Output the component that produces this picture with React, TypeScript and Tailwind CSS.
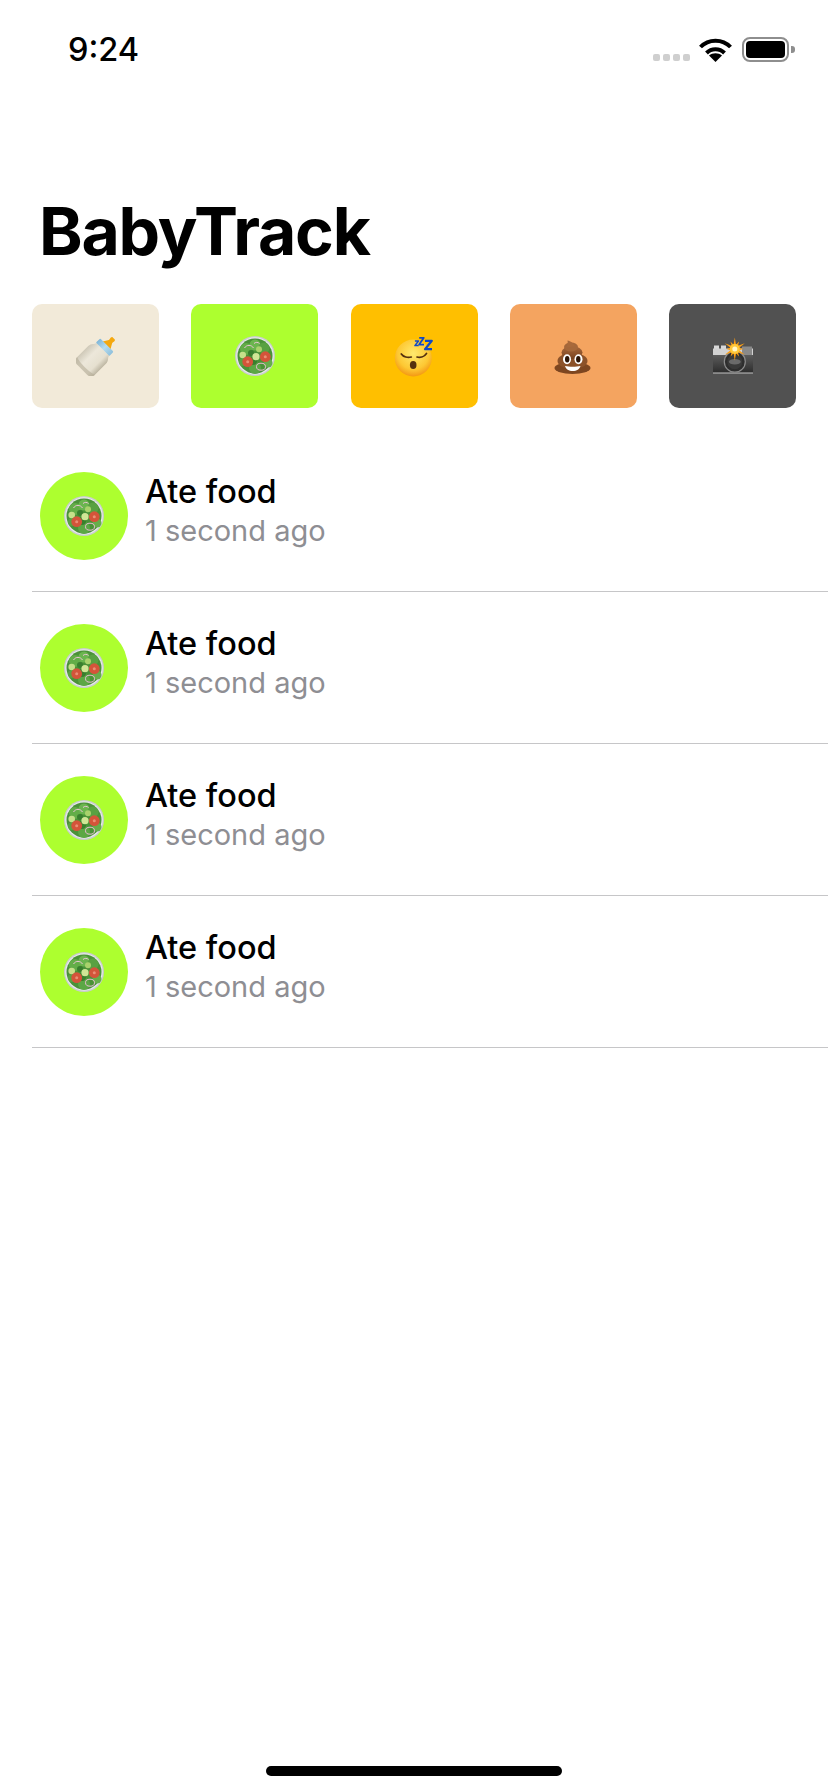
import React from "react";

function Bottle() {
  return (
    <svg viewBox="0 0 40 40" className="h-10 w-10">
      <defs>
        <linearGradient id="milk" x1="0" y1="0" x2="1" y2="0">
          <stop offset="0" stopColor="#cfc9b8" />
          <stop offset="0.35" stopColor="#ece7da" />
          <stop offset="0.75" stopColor="#e6e0d0" />
          <stop offset="1" stopColor="#bdb6a2" />
        </linearGradient>
        <linearGradient id="collar" x1="0" y1="0" x2="1" y2="0">
          <stop offset="0" stopColor="#7fb6d8" />
          <stop offset="0.5" stopColor="#b5dcef" />
          <stop offset="1" stopColor="#8fc0dc" />
        </linearGradient>
      </defs>
      <g transform="translate(20 20) rotate(45)">
        <path d="M-1.300 -25c-.8 0-1.200.7-1.200 1.500 0 1 .5 1.500.2 3L-5.500 -15h11l-3.200-5.500c-.3-1.500.2-2 .2-3 0-.8-.4-1.500-1.200-1.500z" fill="#f4a80f" />
        <rect x="-9.500" y="-15.500" width="19" height="6.500" rx="1.500" fill="url(#collar)" />
        <path d="M-9 -9.500h18c0 2.500 3.500 3.500 3.500 8V14c0 3.500-2.500 5.500-5.500 5.500H-7c-3 0-5.500-2-5.500-5.500V-1.500c0-4.500 3.500-5.500 3.500-8z" fill="url(#milk)" />
        <path d="M-12.500 14c0 3.500 2.500 5.500 5.500 5.500H7c3 0 5.500-2 5.500-5.500-4 2.500-21 2.500-25 0z" fill="#b5ad98" opacity="0.6" />
      </g>
    </svg>
  );
}

function Salad() {
  return (
    <svg viewBox="0 0 40 40" className="h-10 w-10">
      <circle cx="20" cy="20" r="20" fill="#c9cdcd" />
      <circle cx="20" cy="20" r="18.800" fill="#e6e9e8" />
      <circle cx="20" cy="20" r="17.500" fill="#4a9238" />
      <circle cx="11" cy="13" r="6" fill="#63ad48" />
      <circle cx="20" cy="9" r="5.500" fill="#6bb54f" />
      <circle cx="29" cy="12" r="5.500" fill="#58a142" />
      <circle cx="33" cy="27" r="4.500" fill="#66ae4b" />
      <circle cx="20" cy="32" r="6" fill="#5ca745" />
      <circle cx="8" cy="26" r="4" fill="#5aa343" />
      <circle cx="18" cy="25" r="4" fill="#397f2e" />
      <circle cx="16" cy="17" r="3" fill="#397f2e" />
      <circle cx="7.700" cy="19" r="3.300" fill="#c6e08a" />
      <circle cx="21" cy="20.700" r="3.600" fill="#d0e696" />
      <circle cx="24" cy="13.300" r="3" fill="#a9d26c" />
      <circle cx="12.700" cy="25.700" r="5.400" fill="#d4543a" />
      <circle cx="30.300" cy="20.700" r="5.400" fill="#d4543a" />
      <circle cx="12.700" cy="25.700" r="1.500" fill="#ea8f74" />
      <circle cx="30.300" cy="20.700" r="1.500" fill="#ea8f74" />
      <ellipse cx="26" cy="30.700" rx="4.500" ry="3.500" fill="none" stroke="#e8bcd0" strokeWidth="1" />
      <path d="M9.500 12c2-3.500 7-3.500 9 0M19 7.500c1.500-1.500 4-1.500 5.500 0" fill="none" stroke="#ecc4d6" strokeWidth="1" />
    </svg>
  );
}

function Sleeping() {
  return (
    <svg viewBox="0 0 40 42" className="h-[42px] w-10">
      <defs>
        <radialGradient id="face" cx="0.5" cy="0.38" r="0.65">
          <stop offset="0" stopColor="#ffe96e" />
          <stop offset="0.65" stopColor="#fdc833" />
          <stop offset="1" stopColor="#f2900f" />
        </radialGradient>
      </defs>
      <circle cx="19.300" cy="23" r="18.500" fill="url(#face)" />
      <path d="M7.300 19c2 3 6.500 4 10 3M23 22c3.500 1 7.500-.5 9.500-3.500" fill="none" stroke="#54300f" strokeWidth="1.700" strokeLinecap="round" />
      <ellipse cx="19.200" cy="30" rx="3.300" ry="4" fill="#54300f" />
      <path d="M20.900 6h3.600l-3.600 4.600h3.800" fill="none" stroke="#1048c4" strokeWidth="1.500" strokeLinejoin="round" />
      <path d="M25.200 2.800h4.600l-4.600 6.800h4.800" fill="none" stroke="#1048c4" strokeWidth="1.800" strokeLinejoin="round" />
      <path d="M31 5.800h6.800l-6.800 8.400h7" fill="none" stroke="#1048c4" strokeWidth="2.200" strokeLinejoin="round" />
    </svg>
  );
}

function Poop() {
  return (
    <svg viewBox="0 0 40 40" className="h-10 w-10">
      <defs>
        <linearGradient id="brown" x1="0" y1="0" x2="0" y2="1">
          <stop offset="0" stopColor="#a9693c" />
          <stop offset="1" stopColor="#7a431f" />
        </linearGradient>
      </defs>
      <ellipse cx="19.500" cy="32" rx="18" ry="6" fill="#7d4620" />
      <ellipse cx="19.500" cy="25" rx="15" ry="8" fill="#8c5229" />
      <ellipse cx="19" cy="16.500" rx="10.500" ry="6.500" fill="url(#brown)" />
      <ellipse cx="18" cy="11" rx="7" ry="4.500" fill="#a4673a" />
      <path d="M14.500 4.500c3 .5 6.500 2.500 7.500 6l-9 1c1.500-2 2-4.500 1.500-7z" fill="#a8693b" />
      <ellipse cx="14" cy="23.300" rx="4" ry="5" fill="#fff" />
      <ellipse cx="25.500" cy="23.300" rx="4" ry="5" fill="#fff" />
      <ellipse cx="14.200" cy="23.300" rx="2.200" ry="3.300" fill="#2b1406" />
      <ellipse cx="25.300" cy="23.300" rx="2.200" ry="3.300" fill="#2b1406" />
      <path d="M12 30c4.500 1 11 1 15.500 0-.8 3-3.800 5-7.700 5S12.800 33 12 30z" fill="#fff" />
    </svg>
  );
}

// flash burst for the camera: alternating long and short spikes
const FLASH = Array.from({ length: 24 }, (_, i) => {
  const a = (i / 24) * Math.PI * 2;
  const r = i % 2 ? 4.500 : i % 4 ? 8.500 : 11.500;
  return `${(21.8 + r * Math.sin(a)).toFixed(1)},${(13 - r * Math.cos(a)).toFixed(1)}`;
}).join(" ");

function Camera() {
  return (
    <svg viewBox="0 0 40 40" className="h-10 w-10">
      <defs>
        <linearGradient id="body" x1="0" y1="0" x2="0" y2="1">
          <stop offset="0" stopColor="#5c5c5c" />
          <stop offset="1" stopColor="#2c2c2c" />
        </linearGradient>
      </defs>
      <rect x="1" y="9.500" width="5" height="4" fill="#d8d8d8" />
      <rect x="8" y="9.500" width="5" height="4" fill="#d8d8d8" />
      <rect x="0" y="12.500" width="40" height="7" fill="#d2d2d2" />
      <rect x="29" y="10.500" width="10" height="9" fill="#8a8a8a" />
      <rect x="0" y="19" width="40" height="18" fill="url(#body)" />
      <rect x="0" y="36.500" width="40" height="1" fill="#c4c4c4" />
      <circle cx="21.800" cy="25.700" r="10.500" fill="#2e2e2e" stroke="#8c8c8c" strokeWidth="1.200" />
      <circle cx="21.800" cy="25.700" r="7.500" fill="#3a3a3a" />
      <ellipse cx="21.800" cy="25.700" rx="6" ry="2.800" fill="#6a6a6a" />
      <polygon points={FLASH} fill="#ff9f12" />
      <circle cx="21.800" cy="13" r="5" fill="#ffc93a" />
      <circle cx="21.800" cy="13" r="2.500" fill="#fff6c8" />
    </svg>
  );
}

const ACTIONS = [
  { bg: "bg-[#f2ead9]", icon: <Bottle /> },
  { bg: "bg-[#adff2f]", icon: <Salad /> },
  { bg: "bg-[#ffbf00]", icon: <Sleeping /> },
  { bg: "bg-[#f4a460]", icon: <Poop /> },
  { bg: "bg-[#515151]", icon: <Camera /> },
];

export default function App() {
  return (
    <div className="flex h-[1792px] w-[828px] flex-col overflow-hidden bg-white font-['Inter','Liberation_Sans',sans-serif] text-black">
      <div className="flex h-[100px] items-start justify-between pl-[68px] pr-[33px] pt-[31px]">
        <span className="text-[32.5px] font-medium leading-[38px]">9:24</span>
        <div className="flex items-center pt-[6px]">
          <div className="mr-[9px] mt-[16px] flex gap-[3px]">
            {[0, 1, 2, 3].map((i) => (
              <span key={i} className="h-[7px] w-[7px] rounded-[2px] bg-[#cfcfcf]" />
            ))}
          </div>
          <svg viewBox="0 0 33 24" className="mr-[10px] h-[24px] w-[33px]">
            <path d="M1.500 9C9.500 .5 23.500 .5 31.500 9" fill="none" stroke="#000" strokeWidth="4" />
            <path d="M7.500 15c5-5 13-5 18 0" fill="none" stroke="#000" strokeWidth="4" />
            <path d="M16.500 24l-6.500-6.500c3.500-3 9.500-3 13 0z" fill="#000" />
          </svg>
          <div className="flex items-center">
            <div className="h-[25px] w-[47px] rounded-[8px] border-[2px] border-[#8e8e8e] p-[2px]">
              <div className="h-full w-full rounded-[4px] bg-black" />
            </div>
            <div className="ml-[2px] h-[7px] w-[4px] rounded-r-[3px] bg-[#8e8e8e]" />
          </div>
        </div>
      </div>

      <h1 className="mt-[95px] pl-[39px] text-[66px] font-bold leading-[72px] tracking-[-1.2px]">BabyTrack</h1>

      <div className="mt-[37px] flex justify-between px-[32px]">
        {ACTIONS.map((a, i) => (
          <div key={i} className={`flex h-[104px] w-[127px] items-center justify-center rounded-[10px] ${a.bg}`}>
            {a.icon}
          </div>
        ))}
      </div>

      <div className="mt-[32px] ml-[32px]">
        {[0, 1, 2, 3].map((i) => (
          <div key={i} className="flex h-[152px] items-center border-b border-[#c6c6c8] pl-[8px]">
            <div className="flex h-[88px] w-[88px] items-center justify-center rounded-full bg-[#adff2f]">
              <Salad />
            </div>
            <div className="ml-[17px] pb-[10px]">
              <div className="text-[32.5px] font-[550] leading-[40px]">Ate food</div>
              <div className="text-[29px] leading-[38px] text-[#8e8e93]">1 second ago</div>
            </div>
          </div>
        ))}
      </div>

      <div className="mt-auto mb-[16px] flex justify-center">
        <div className="h-[10px] w-[296px] rounded-full bg-black" />
      </div>
    </div>
  );
}
